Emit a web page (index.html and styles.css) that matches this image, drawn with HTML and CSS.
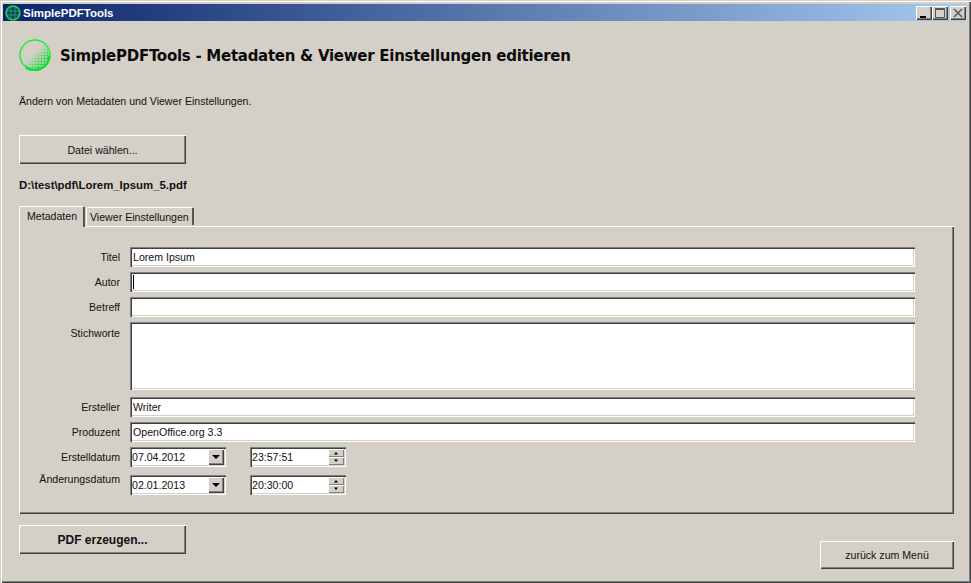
FILE: index.html
```html
<!DOCTYPE html>
<html lang="de">
<head>
<meta charset="utf-8">
<title>SimplePDFTools</title>
<link rel="stylesheet" href="styles.css">
</head>
<body>
<div class="window">
  <header class="titlebar">
    <svg class="title-icon" viewBox="0 0 16 16"><circle cx="8" cy="8" r="6.800" fill="#0d3a58" stroke="#22c850" stroke-width="1.800"/><path d="M2 6h12M2 10h12M6 2v12M10 2v12" stroke="#2f9a86" stroke-width="1" fill="none"/></svg>
    <span class="title-text">SimplePDFTools</span>
    <div class="caption-buttons">
      <span class="cap-btn"><svg viewBox="0 0 16 14"><rect x="4" y="10" width="6" height="2" fill="#000"/></svg></span>
      <span class="cap-btn"><svg viewBox="0 0 16 14"><path d="M3.500 2.500h9v9h-9z M3.500 3.500h9" fill="none" stroke="#555"/></svg></span>
      <span class="cap-btn cap-close"><svg viewBox="0 0 16 14"><path d="M4 3l8 8M12 3l-8 8" stroke="#555" stroke-width="1.500" fill="none"/></svg></span>
    </div>
  </header>
  <main class="content">
    <div class="heading">
      <svg class="logo" viewBox="0 0 32 32">
        <defs>
          <pattern id="dots" width="3" height="3" patternUnits="userSpaceOnUse"><circle cx="1.500" cy="1.500" r="1.200" fill="#12d83a"/></pattern>
          <linearGradient id="fade" x1="0.250" y1="0.250" x2="0.850" y2="0.850"><stop offset="0.350" stop-color="#000"/><stop offset="0.800" stop-color="#fff"/></linearGradient>
          <mask id="fadeMask"><rect width="32" height="32" fill="url(#fade)"/></mask>
        </defs>
        <circle cx="16" cy="16" r="15" fill="#d4d0c8" stroke="#14f02a" stroke-width="1.400"/>
        <path d="M30.500 17a15 15 0 0 1-24 11" fill="none" stroke="#12e02c" stroke-width="2.400"/>
        <circle cx="16" cy="16" r="14" fill="url(#dots)" mask="url(#fadeMask)"/>
      </svg>
      <h1 class="heading-text">SimplePDFTools - Metadaten &amp; Viewer Einstellungen editieren</h1>
    </div>
    <p class="intro">Ändern von Metadaten und Viewer Einstellungen.</p>
    <button class="btn btn-file" type="button">Datei wählen...</button>
    <p class="filepath">D:\test\pdf\Lorem_Ipsum_5.pdf</p>
    <div class="tabs">
      <span class="tab tab-active">Metadaten</span>
      <span class="tab tab-other">Viewer Einstellungen</span>
    </div>
    <section class="panel">
      <div class="form">
        <label class="lbl">Titel</label><div class="field">Lorem Ipsum</div>
        <label class="lbl">Autor</label><div class="field"><span class="caret"></span></div>
        <label class="lbl">Betreff</label><div class="field"></div>
        <label class="lbl lbl-top">Stichworte</label><div class="field field-area"></div>
        <label class="lbl row-gap">Ersteller</label><div class="field row-gap">Writer</div>
        <label class="lbl">Produzent</label><div class="field">OpenOffice.org 3.3</div>
        <label class="lbl">Erstelldatum</label>
        <div class="pickers">
          <div class="field picker">07.04.2012<span class="combo-arrow"><svg viewBox="0 0 16 16"><path d="M4 6h8l-4 4z" fill="#000"/></svg></span></div>
          <div class="field picker">23:57:51<span class="spin"><span class="spin-btn"><svg viewBox="0 0 16 8"><path d="M6 5.500h4l-2-2.500z" fill="#000"/></svg></span><span class="spin-btn"><svg viewBox="0 0 16 8"><path d="M6 2.500h4l-2 2.500z" fill="#000"/></svg></span></span></div>
        </div>
        <label class="lbl lbl-raised row-gap-l">Änderungsdatum</label>
        <div class="pickers row-gap-l">
          <div class="field picker">02.01.2013<span class="combo-arrow"><svg viewBox="0 0 16 16"><path d="M4 6h8l-4 4z" fill="#000"/></svg></span></div>
          <div class="field picker">20:30:00<span class="spin"><span class="spin-btn"><svg viewBox="0 0 16 8"><path d="M6 5.500h4l-2-2.500z" fill="#000"/></svg></span><span class="spin-btn"><svg viewBox="0 0 16 8"><path d="M6 2.500h4l-2 2.500z" fill="#000"/></svg></span></span></div>
        </div>
      </div>
    </section>
    <div class="footer">
      <button class="btn btn-pdf" type="button">PDF erzeugen...</button>
      <button class="btn btn-back" type="button">zurück zum Menü</button>
    </div>
  </main>
</div>
</body>
</html>
```
FILE: styles.css
```css
* { box-sizing: border-box; }
html, body { margin: 0; padding: 0; }
body {
  width: 971px;
  height: 583px;
  overflow: hidden;
  background: #d4d0c8;
  font-family: "Liberation Sans", Arial, sans-serif;
  font-size: 10.600px;
  color: #111;
}
.window {
  width: 971px;
  height: 583px;
  padding: 4px 5px 3px 3px;
  background: #d4d0c8;
  box-shadow: inset 1px 1px 0 #d4d0c8, inset 2px 2px 0 #fff, inset -1px -1px 0 #404040, inset -2px -2px 0 #808080;
}
.titlebar {
  height: 17px;
  display: flex;
  align-items: center;
  padding: 0 0 0 2px;
  background: linear-gradient(90deg, #0a246a 0%, #a6caf0 100%);
}
.title-icon { width: 16px; height: 16px; flex: none; }
.title-text {
  margin-left: 2px;
  font-weight: 700;
  font-size: 11.500px;
  color: #fff;
}
.caption-buttons { margin-left: auto; display: flex; }
.cap-btn {
  width: 16px;
  height: 14px;
  background: #d4d0c8;
  box-shadow: inset 1px 1px 0 #fff, inset -1px -1px 0 #404040, inset -2px -2px 0 #808080;
  display: block;
}
.cap-btn svg { display: block; width: 16px; height: 14px; }
.cap-close { margin-left: 2px; }
.content { padding: 0 14px 0 16px; }
.heading { display: flex; align-items: center; margin-top: 18px; height: 32px; }
.logo { width: 32px; height: 32px; flex: none; }
.heading-text {
  margin: 2px 0 0 9px;
  font-family: "DejaVu Sans", sans-serif;
  font-size: 15px;
  font-weight: 700;
  letter-spacing: -0.270px;
  color: #0b0b0b;
  white-space: nowrap;
}
.intro { margin: 23px 0 0; height: 14px; line-height: 14px; }
.btn {
  display: block;
  margin: 0;
  padding: 0;
  border: 0;
  background: #d4d0c8;
  font: inherit;
  color: #111;
  text-align: center;
  box-shadow: inset 1px 1px 0 #fff, inset -1px -1px 0 #404040, inset -2px -2px 0 #808080;
}
.btn-file { width: 167px; height: 29px; margin-top: 27px; }
.filepath { margin: 14px 0 0; height: 14px; line-height: 14px; font-size: 11.400px; font-weight: 700; }
.tabs { display: flex; align-items: flex-end; height: 20px; margin-top: 14px; position: relative; z-index: 1; }
.tab {
  border-radius: 2px 2px 0 0;
  border-top: 1px solid #fff;
  border-left: 1px solid #fff;
  border-right: 2px solid #555;
}
.tab-other {
  width: 108px;
  height: 18px;
  line-height: 18px;
  padding: 0 0 0 3px;
  margin: 0 0 1px 1px;
}
.tab-active {
  height: 21px;
  line-height: 18px;
  width: 66px;
  margin: 0 0 -1px;
  padding: 0 0 3px 7px;
  background: #d4d0c8;
}
.panel {
  width: 935px;
  height: 288px;
  padding: 21px 0 0 1px;
  box-shadow: inset 1px 1px 0 #fff, inset -1px -1px 0 #404040, inset -2px -2px 0 #808080;
}
.form {
  display: grid;
  grid-template-columns: 100px 785px;
  column-gap: 10px;
  row-gap: 5px;
  grid-auto-rows: min-content;
}
.lbl { height: 20px; line-height: 20px; text-align: right; }
.lbl-top { line-height: 22px; }
.lbl-raised { position: relative; bottom: 6px; }
.row-gap { margin-top: 2px; }
.row-gap-l { margin-top: 3px; }
.field {
  position: relative;
  height: 20px;
  line-height: 18px;
  padding: 1px 2px 0 3px;
  background: #fff;
  box-shadow: inset 1px 1px 0 #808080, inset 2px 2px 0 #404040, inset -1px -1px 0 #fff, inset -2px -2px 0 #d4d0c8;
}
.field-area { height: 68px; }
.caret { display: block; width: 1px; height: 14px; margin-top: 2px; background: #000; }
.pickers { display: flex; gap: 24px; }
.picker { width: 96px; padding-left: 2px; }
.combo-arrow {
  position: absolute;
  right: 2px;
  top: 2px;
  width: 16px;
  height: 16px;
  background: #d4d0c8;
  box-shadow: inset 1px 1px 0 #fff, inset -1px -1px 0 #404040, inset -2px -2px 0 #808080;
}
.combo-arrow svg { display: block; width: 16px; height: 16px; }
.spin { position: absolute; right: 2px; top: 2px; width: 16px; height: 16px; display: flex; flex-direction: column; }
.spin-btn {
  width: 16px;
  height: 8px;
  background: #d4d0c8;
  box-shadow: inset 1px 1px 0 #fff, inset -1px -1px 0 #808080;
}
.spin-btn svg { display: block; width: 16px; height: 8px; }
.footer { display: flex; justify-content: space-between; align-items: flex-start; width: 935px; margin-top: 11px; }
.btn-pdf { width: 167px; height: 29px; font-size: 12px; font-weight: 700; }
.btn-back { width: 134px; height: 28px; margin-top: 16px; }
```
